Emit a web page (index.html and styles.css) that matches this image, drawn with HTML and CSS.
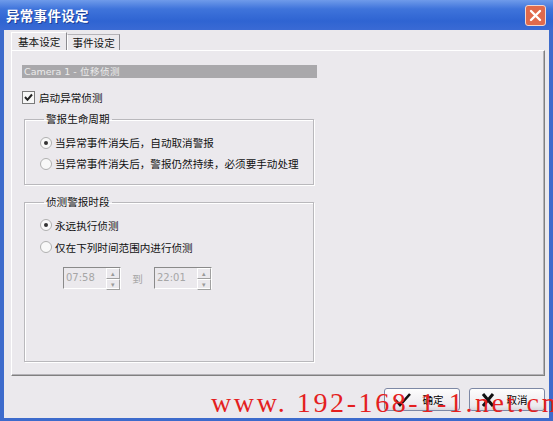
FILE: index.html
```html
<!DOCTYPE html>
<html lang="zh-CN">
<head>
    <meta charset="UTF-8">
    <title>异常事件设定</title>
    <link rel="stylesheet" href="styles.css">
</head>
<body>
    <div class="window">
        <div class="titlebar">
            <span class="title">异常事件设定</span>
            <span class="close">
                <svg width="13" height="13" viewBox="0 0 13 13"><path d="M2 2 L11 11 M11 2 L2 11" stroke="#fff" stroke-width="2.4" stroke-linecap="round"/></svg>
            </span>
        </div>
        <div class="frame">
            <div class="tabs">
                <span class="tab active">基本设定</span>
                <span class="tab">事件设定</span>
            </div>
            <div class="panel">
                <div class="cam-bar">Camera 1 - 位移侦测</div>
                <label class="check-row">
                    <span class="checkbox">
                        <svg width="11" height="11" viewBox="0 0 11 11"><path d="M2 5 L4.5 7.8 L9 2.5" fill="none" stroke="#222" stroke-width="2"/></svg>
                    </span>
                    启动异常侦测
                </label>

                <fieldset class="group group-life">
                    <legend>警报生命周期</legend>
                    <div class="radio-row"><span class="radio on"></span>当异常事件消失后，自动取消警报</div>
                    <div class="radio-row"><span class="radio"></span>当异常事件消失后，警报仍然持续，必须要手动处理</div>
                </fieldset>

                <fieldset class="group group-time">
                    <legend>侦测警报时段</legend>
                    <div class="radio-row tall"><span class="radio on"></span>永远执行侦测</div>
                    <div class="radio-row tall"><span class="radio"></span>仅在下列时间范围内进行侦测</div>
                    <div class="time-row">
                        <div class="spin">
                            <span class="spin-text">07:58</span>
                            <span class="spin-btns"><span class="up">&#9652;</span><span class="down">&#9662;</span></span>
                        </div>
                        <span class="to">到</span>
                        <div class="spin">
                            <span class="spin-text">22:01</span>
                            <span class="spin-btns"><span class="up">&#9652;</span><span class="down">&#9662;</span></span>
                        </div>
                    </div>
                </fieldset>
            </div>
            <div class="buttons">
                <button class="btn">
                    <svg width="18" height="16" viewBox="0 0 18 16"><path d="M1.5 8 L6 13 L16 2" fill="none" stroke="#111" stroke-width="2.6"/></svg>
                    确定
                </button>
                <button class="btn">
                    <svg width="16" height="16" viewBox="0 0 16 16"><path d="M3 2 L13 14 M13 2 L3 14" stroke="#111" stroke-width="3"/></svg>
                    取消
                </button>
            </div>
        </div>
        <div class="watermark">www. 192-168-1-1.net.cn</div>
    </div>
</body>
</html>
```

FILE: styles.css
```css
body { margin: 0; font-family: "Noto Sans CJK SC", "Noto Sans", sans-serif; font-size: 10.6px; color: #111; }
.window { position: relative; width: 553px; height: 421px; display: flex; flex-direction: column; overflow: hidden; }

.titlebar { height: 30px; display: flex; align-items: center; justify-content: space-between; padding: 0 7px 0 6px;
    background: linear-gradient(#6f9bea, #3f74db 30%, #2f64d2 70%, #3a6ad4); box-sizing: border-box; }
.title { color: #fff; font-weight: bold; font-size: 13.5px; letter-spacing: 0.3px; text-shadow: 1px 1px 0 #1c3f99; }
.close { width: 19px; height: 19px; border: 1px solid #f3d6cc; border-radius: 3px; background: #e06a4c;
    display: flex; align-items: center; justify-content: center; }

.frame { flex: 1; background: #ebe9ed; border-left: 4px solid #3d6bcc; border-right: 4px solid #3d6bcc; border-bottom: 3px solid #3d6bcc;
    padding: 3px 4px 0 7px; display: flex; flex-direction: column; }

.tabs { display: flex; height: 17px; align-items: flex-end; }
.tab { height: 15px; padding: 0 4px; line-height: 15px; border: 1px solid #b5b3b8; border-bottom: none; border-left-color: #fff; background: #ebe9ed; }
.tab.active { height: 17px; line-height: 17px; padding: 0 6px; border-top-color: #fff; border-right: 1px solid #8c8b90; }
.tab + .tab { border-right: 1px solid #8c8b90; border-left: 1px solid #fff; }

.panel { height: 326px; box-sizing: border-box; border: 1px solid #fff; border-right-color: #808080; border-bottom-color: #808080;
    box-shadow: inset -1px -1px 0 #b4b2b7; padding: 14px 0 13px 10px; display: flex; flex-direction: column; }

.cam-bar { width: 295px; height: 13px; line-height: 13px; background: #a9a8ab; color: #ececec; font-family: "DejaVu Sans", sans-serif; font-size: 9.5px; padding-left: 2px; box-sizing: border-box; }

.check-row { display: flex; align-items: center; height: 16px; margin-top: 11px; gap: 4px; }
.checkbox { width: 11px; height: 11px; border: 1px solid #7a7a7a; background: #f7f7f7; display: flex; }

.group { margin: 7px 0 0 2px; width: 290px; box-sizing: border-box; padding: 6px 0 10px 15px; border: 1px solid #b9b8bc;
    box-shadow: 1px 1px 0 #fff, inset 1px 1px 0 #fff; }
.group legend { padding: 0 2px; margin-left: 4px; line-height: 14px; }
.group-time { margin-top: 10px; flex: 1; padding-top: 5px; }

.radio-row { display: flex; align-items: center; height: 21px; gap: 3px; }
.radio-row.tall { height: 22px; }
.radio { width: 10px; height: 10px; border: 1px solid #b0b0b0; border-radius: 50%; background: #f8f8f8; position: relative; }
.radio.on::after { content: ""; position: absolute; left: 3px; top: 3px; width: 4px; height: 4px; border-radius: 50%; background: #333; }

.time-row { display: flex; align-items: center; margin: 9px 0 0 23px; height: 22px; }
.spin { display: flex; width: 58px; height: 22px; box-sizing: border-box; border: 1px solid #fff; border-top-color: #8a8a8a; border-left-color: #8a8a8a; background: #ebe9ed; }
.spin-text { flex: 1; color: #a6a6a6; font-family: "DejaVu Sans", sans-serif; font-size: 10px; line-height: 20px; padding-left: 2px; }
.spin-btns { width: 14px; display: flex; flex-direction: column; }
.spin-btns span { flex: 1; font-size: 7px; line-height: 9px; text-align: center; color: #9a9a9a; border: 1px solid #fff; border-right-color: #a0a0a0; border-bottom-color: #a0a0a0; }
.to { width: 33px; text-align: center; color: #a6a6a6; }

.buttons { display: flex; justify-content: flex-end; gap: 9px; margin-top: 12px; }
.btn { width: 76px; height: 23px; display: flex; align-items: center; justify-content: center; gap: 10px; padding: 0 10px 0 4px;
    font-family: inherit; font-size: 10.6px; border: 1px solid #7d88a5; border-radius: 3px; background: linear-gradient(#fdfdfd, #eceaee 80%, #d9d7dc); }
.btn svg { flex: none; }

.watermark { position: absolute; left: 211px; top: 387px; font-family: "Liberation Serif", serif; font-size: 28px; line-height: 32px;
    color: #e41f1f; letter-spacing: 2.6px; white-space: nowrap; }
```
